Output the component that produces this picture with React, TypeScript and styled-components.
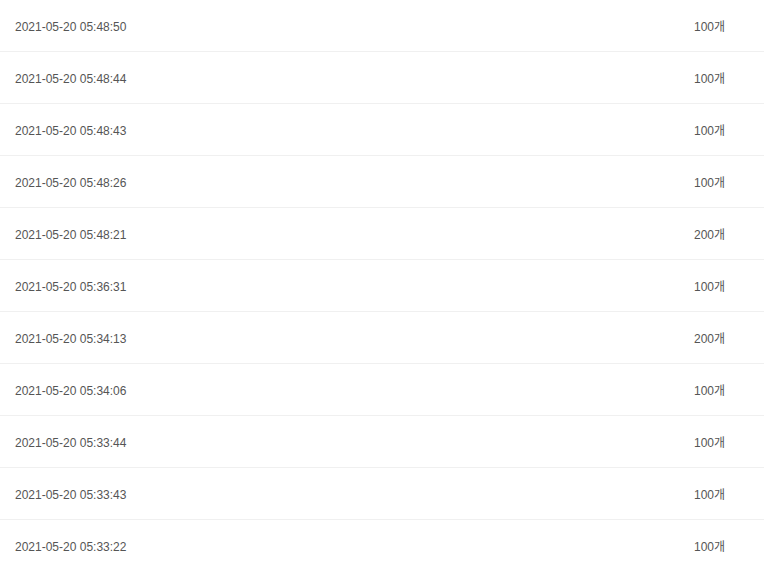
import React from "react";
import styled, { createGlobalStyle } from "styled-components";

const Global = createGlobalStyle`
  html, body { margin: 0; padding: 0; background: #fff; }
  body { font-family: "Liberation Sans", "Noto Sans CJK KR", sans-serif; }
`;

const List = styled.div`
  display: flex;
  flex-direction: column;
  width: 764px;
`;

const Row = styled.div`
  display: grid;
  grid-template-columns: 1fr 70px;
  align-items: center;
  height: 52px;
  box-sizing: border-box;
  border-bottom: 1px solid #f0f0f0;
  font-size: 12px;
  line-height: 14px;
  color: #555;
`;

const DateCell = styled.div`
  padding-left: 15px;
  padding-top: 2px;
`;

const CountCell = styled.div`
  padding-top: 2px;
  line-height: 14px;
  height: 14px;
  overflow: visible;
`;

const rows: [string, number][] = [
  ["2021-05-20 05:48:50", 100],
  ["2021-05-20 05:48:44", 100],
  ["2021-05-20 05:48:43", 100],
  ["2021-05-20 05:48:26", 100],
  ["2021-05-20 05:48:21", 200],
  ["2021-05-20 05:36:31", 100],
  ["2021-05-20 05:34:13", 200],
  ["2021-05-20 05:34:06", 100],
  ["2021-05-20 05:33:44", 100],
  ["2021-05-20 05:33:43", 100],
  ["2021-05-20 05:33:22", 100],
];

export default function App() {
  return (
    <>
      <Global />
      <List>
        {rows.map(([d, n], i) => (
          <Row key={i}>
            <DateCell>{d}</DateCell>
            <CountCell>{n}개</CountCell>
          </Row>
        ))}
      </List>
    </>
  );
}
